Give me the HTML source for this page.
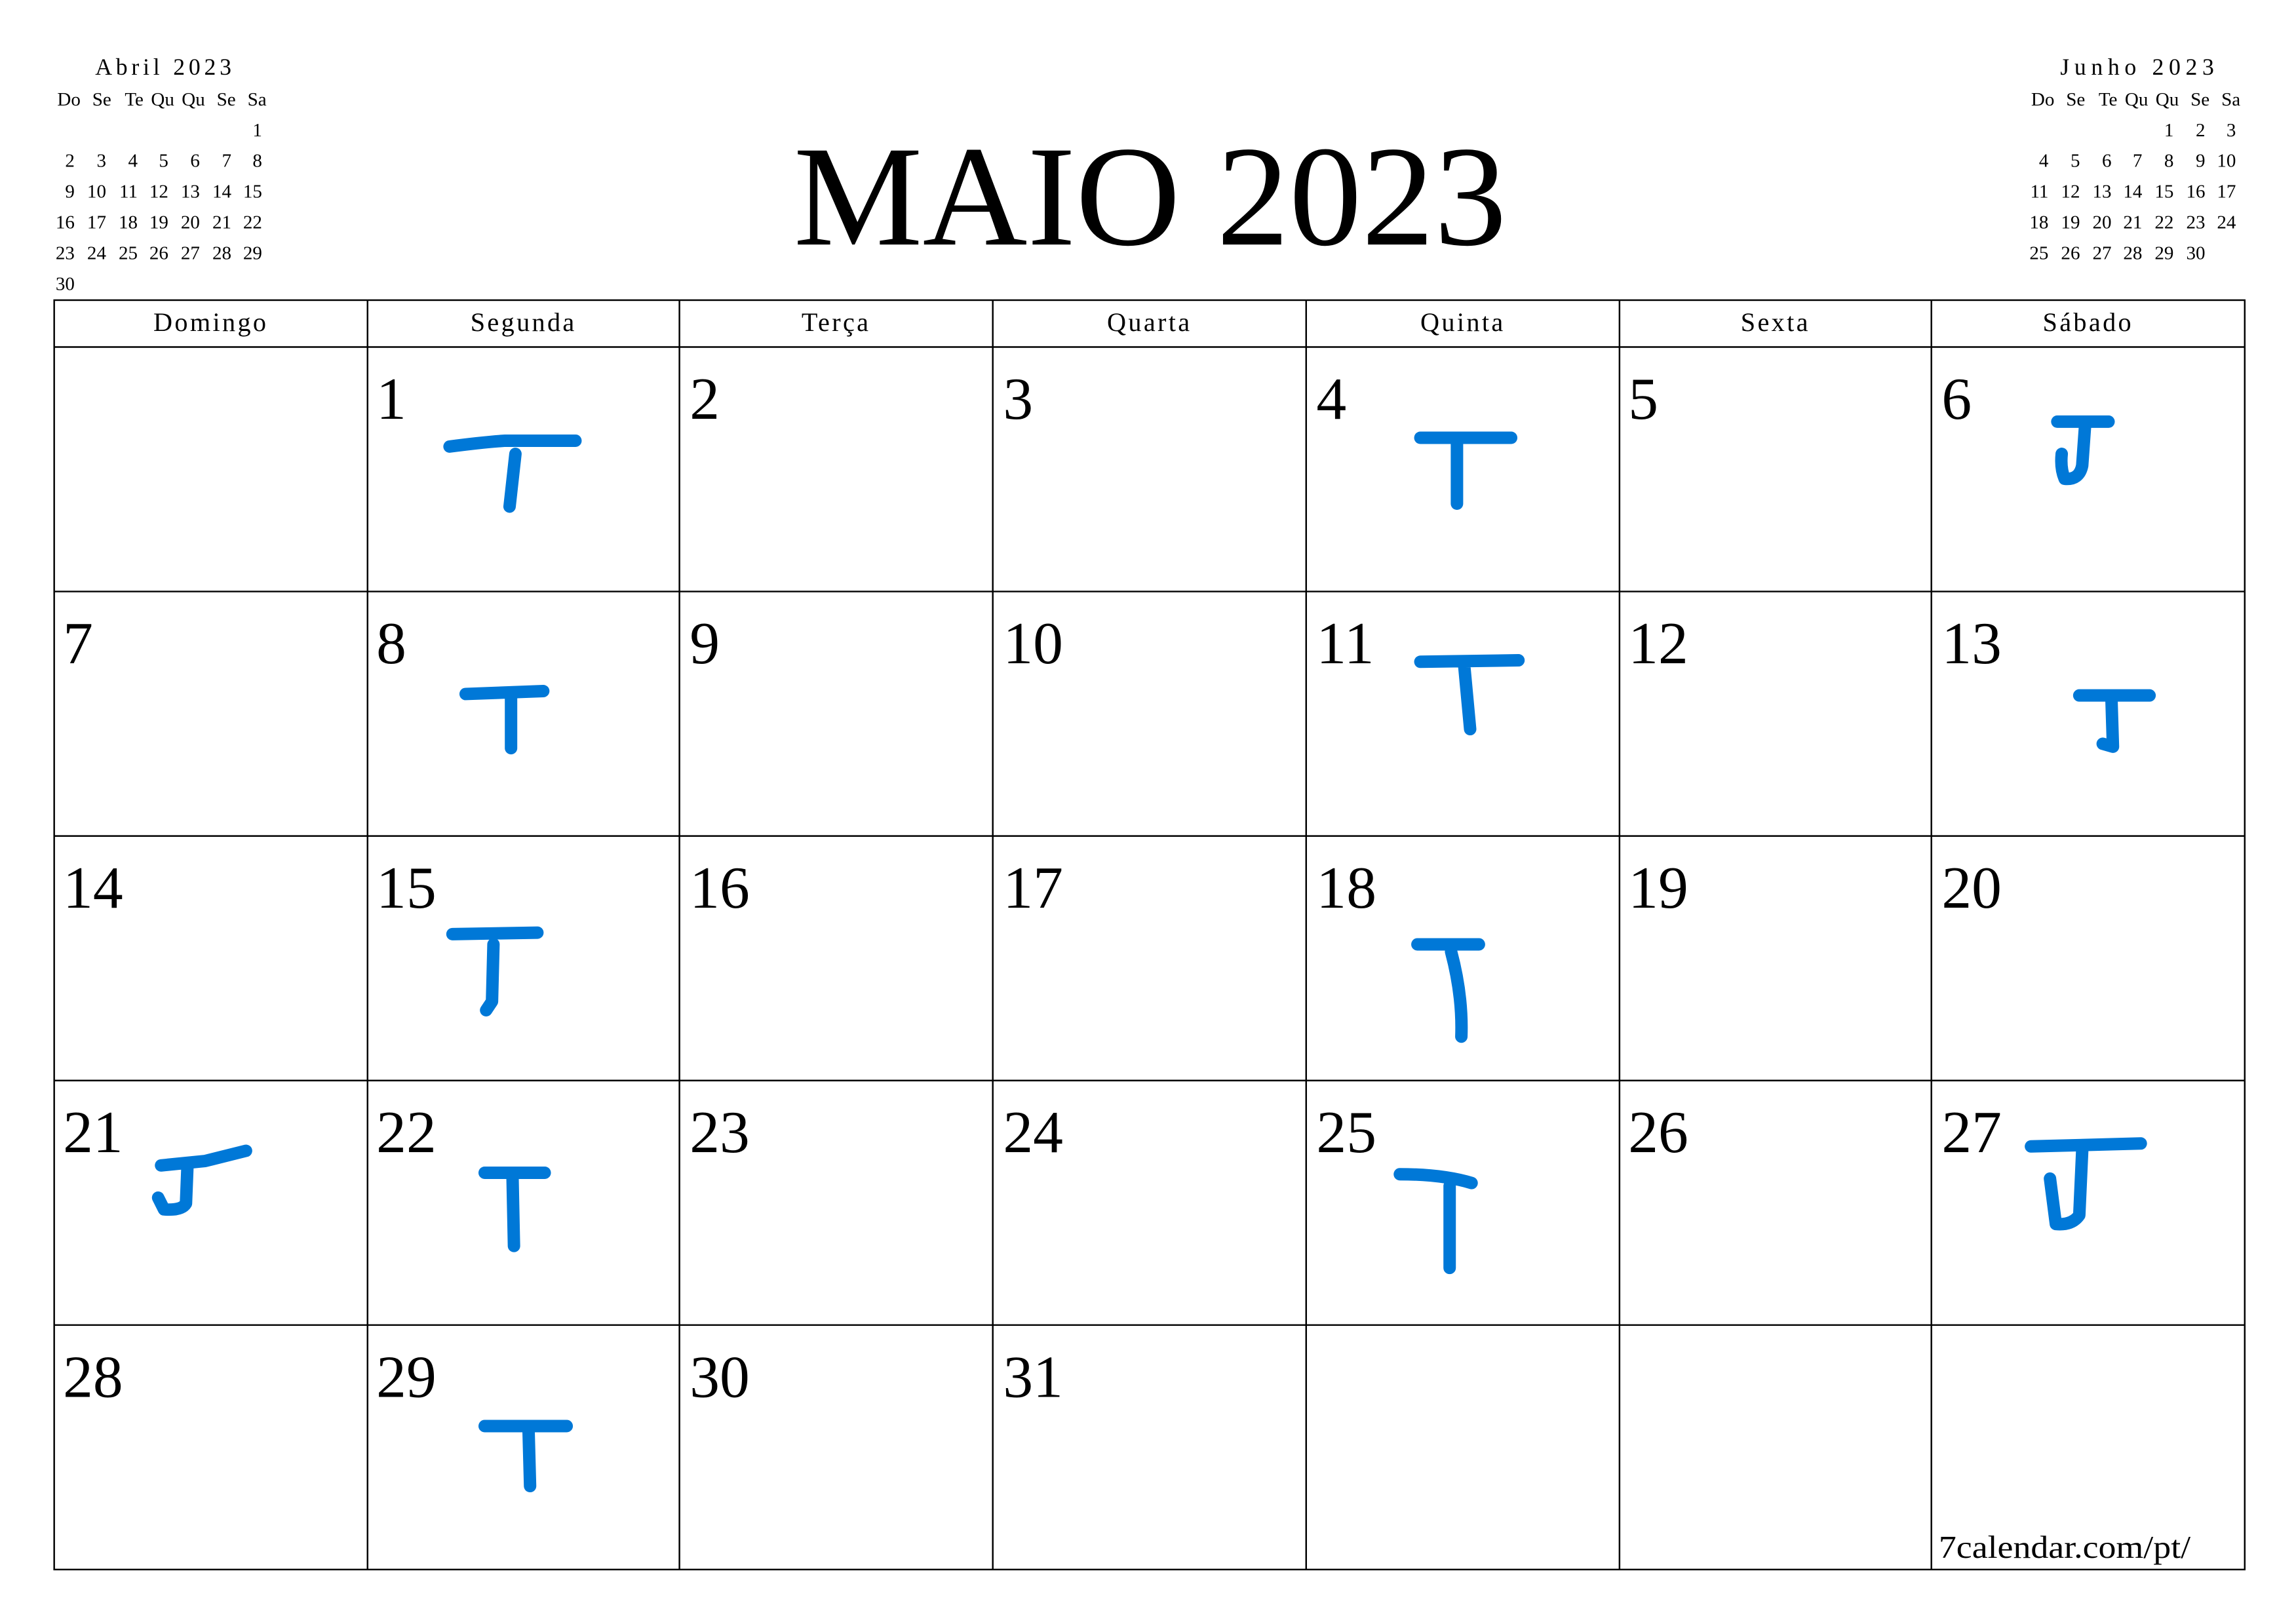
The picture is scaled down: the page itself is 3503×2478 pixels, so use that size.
<!DOCTYPE html>
<html><head><meta charset="utf-8"><style>html,body{margin:0;padding:0;background:#fff}svg{display:block}</style></head>
<body>
<svg xmlns="http://www.w3.org/2000/svg" width="3503" height="2478" viewBox="0 0 1568 1109.2" font-family="Liberation Serif, serif">
<rect width="1568" height="1110" fill="#fff"/>
<text x="785.5" y="167" font-size="98" text-anchor="middle" textLength="487" lengthAdjust="spacingAndGlyphs">MAIO 2023</text>
<g font-size="16" text-anchor="middle">
<text x="111.5" y="51" textLength="93" lengthAdjust="spacing">Abril 2023</text>
<text x="1459.5" y="51" textLength="105" lengthAdjust="spacing">Junho 2023</text>
</g>
<g font-size="13" text-anchor="end">
<text x="55" y="72">Do</text><text x="76" y="72">Se</text><text x="98" y="72">Te</text><text x="119" y="72">Qu</text><text x="140" y="72">Qu</text><text x="161" y="72">Se</text><text x="182" y="72">Sa</text>
<text x="179" y="93">1</text>
<text x="51" y="114">2</text><text x="72.5" y="114">3</text><text x="94" y="114">4</text><text x="115" y="114">5</text><text x="136.5" y="114">6</text><text x="158" y="114">7</text><text x="179" y="114">8</text>
<text x="51" y="135">9</text><text x="72.5" y="135">10</text><text x="94" y="135">11</text><text x="115" y="135">12</text><text x="136.5" y="135">13</text><text x="158" y="135">14</text><text x="179" y="135">15</text>
<text x="51" y="156">16</text><text x="72.5" y="156">17</text><text x="94" y="156">18</text><text x="115" y="156">19</text><text x="136.5" y="156">20</text><text x="158" y="156">21</text><text x="179" y="156">22</text>
<text x="51" y="177">23</text><text x="72.5" y="177">24</text><text x="94" y="177">25</text><text x="115" y="177">26</text><text x="136.5" y="177">27</text><text x="158" y="177">28</text><text x="179" y="177">29</text>
<text x="51" y="198">30</text>
<g transform="translate(1348,0)">
<text x="55" y="72">Do</text><text x="76" y="72">Se</text><text x="98" y="72">Te</text><text x="119" y="72">Qu</text><text x="140" y="72">Qu</text><text x="161" y="72">Se</text><text x="182" y="72">Sa</text>
<text x="136.5" y="93">1</text><text x="158" y="93">2</text><text x="179" y="93">3</text>
<text x="51" y="114">4</text><text x="72.5" y="114">5</text><text x="94" y="114">6</text><text x="115" y="114">7</text><text x="136.5" y="114">8</text><text x="158" y="114">9</text><text x="179" y="114">10</text>
<text x="51" y="135">11</text><text x="72.5" y="135">12</text><text x="94" y="135">13</text><text x="115" y="135">14</text><text x="136.5" y="135">15</text><text x="158" y="135">16</text><text x="179" y="135">17</text>
<text x="51" y="156">18</text><text x="72.5" y="156">19</text><text x="94" y="156">20</text><text x="115" y="156">21</text><text x="136.5" y="156">22</text><text x="158" y="156">23</text><text x="179" y="156">24</text>
<text x="51" y="177">25</text><text x="72.5" y="177">26</text><text x="94" y="177">27</text><text x="115" y="177">28</text><text x="136.5" y="177">29</text><text x="158" y="177">30</text>
</g>
</g>
<g stroke="#000" stroke-width="1.1" fill="none">
<rect x="37" y="205" width="1496" height="867"/>
<path d="M37 237H1533M37 404H1533M37 571H1533M37 738H1533M37 905H1533M251 205V1072M464 205V1072M678 205V1072M892 205V1072M1106 205V1072M1319 205V1072"/>
</g>
<g font-size="18" text-anchor="middle" letter-spacing="1.5">
<text x="144" y="226">Domingo</text><text x="357.5" y="226">Segunda</text><text x="571" y="226">Terça</text><text x="785" y="226">Quarta</text><text x="999" y="226">Quinta</text><text x="1212.5" y="226">Sexta</text><text x="1426" y="226">Sábado</text>
</g>
<g font-size="41">
<text x="257" y="286">1</text><text x="471" y="286">2</text><text x="685" y="286">3</text><text x="899" y="286">4</text><text x="1112" y="286">5</text><text x="1326" y="286">6</text>
<text x="43" y="453">7</text><text x="257" y="453">8</text><text x="471" y="453">9</text><text x="685" y="453">10</text><text x="899" y="453">11</text><text x="1112" y="453">12</text><text x="1326" y="453">13</text>
<text x="43" y="620">14</text><text x="257" y="620">15</text><text x="471" y="620">16</text><text x="685" y="620">17</text><text x="899" y="620">18</text><text x="1112" y="620">19</text><text x="1326" y="620">20</text>
<text x="43" y="787">21</text><text x="257" y="787">22</text><text x="471" y="787">23</text><text x="685" y="787">24</text><text x="899" y="787">25</text><text x="1112" y="787">26</text><text x="1326" y="787">27</text>
<text x="43" y="954">28</text><text x="257" y="954">29</text><text x="471" y="954">30</text><text x="685" y="954">31</text>
</g>
<text x="1324" y="1064" font-size="22" textLength="172" lengthAdjust="spacingAndGlyphs">7calendar.com/pt/</text>
<g stroke="#0078d7" stroke-width="8.5" fill="none" stroke-linecap="round" stroke-linejoin="round">
<path d="M307 305Q330 302 345 301L393 301M352 310L348 346"/>
<path d="M970 299H1032M995 302V344"/>
<path d="M1405 288H1440M1424 290L1422 318Q1420 328 1410 327Q1407 320 1408 310"/>
<path d="M318 474L371 472M349 476V511"/>
<path d="M970 452L1037 451M1000 455L1004 498"/>
<path d="M1420 475H1468M1442 478L1443 510L1436 508"/>
<path d="M309 638L367 637M337 645L336 684L332 690"/>
<path d="M968 645H1010M991 650Q999 680 998 708"/>
<path d="M110 796L140 793L168 786M128 797L127 822Q124 827 112 826L108 818"/>
<path d="M331 801H372M350 803L351 851"/>
<path d="M956 802Q985 802 1005 808M990 810V866"/>
<path d="M1387 783L1462 781M1422 786L1420 830Q1415 837 1404 836L1400 805"/>
<path d="M331 974H387M361 978L362 1015"/>
</g>
</svg>
</body></html>
